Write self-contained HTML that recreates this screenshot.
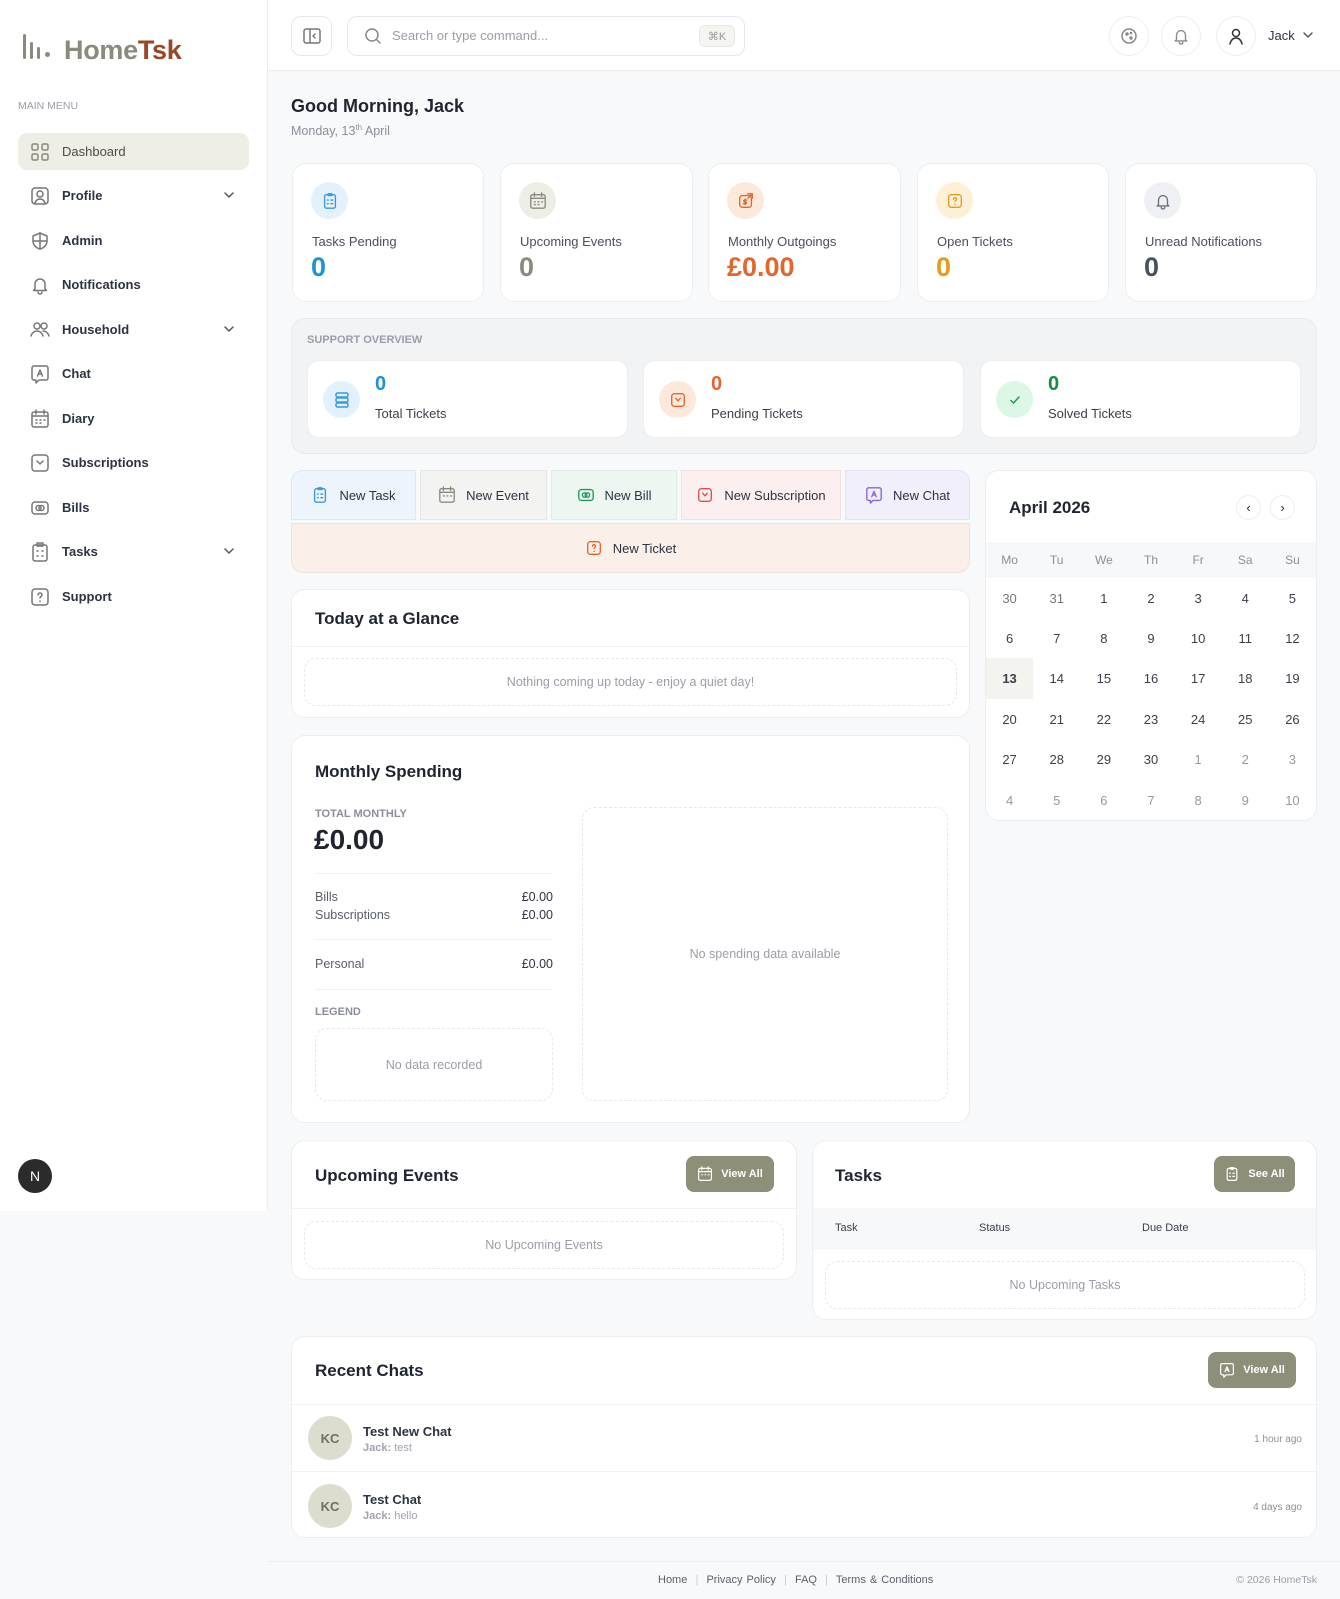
<!DOCTYPE html>
<html><head><meta charset="utf-8">
<style>
*{box-sizing:border-box;margin:0;padding:0}
body{width:1340px;height:1599px;background:#f8f9fa;font-family:"Liberation Sans",sans-serif;color:#1f2430;position:relative;overflow:hidden}
.a{position:absolute}
.card{position:absolute;background:#fff;border:1px solid #eceef0;border-radius:14px}
svg{display:block}
.ic{fill:none;stroke-width:1.5;stroke-linecap:round;stroke-linejoin:round}
.nav{position:absolute;left:18px;width:231px;height:37px;display:flex;align-items:center;font-size:13px;color:#2d3340;font-weight:bold}
.nav svg{margin-left:12px;margin-right:12px}
.chev{position:absolute;right:2px;top:12px}
.stat .lbl{position:absolute;left:19px;top:70px;font-size:13px;color:#4a4f5a}
.stat .num{position:absolute;left:18px;top:88px;font-size:27px;font-weight:bold}
.circ{position:absolute;width:37px;height:37px;border-radius:50%;display:flex;align-items:center;justify-content:center}
.qa{position:absolute;top:470px;height:50px;display:flex;align-items:center;justify-content:center;font-size:13px;color:#2d3340;gap:10px}
.cal{font-size:13px;color:#3a3f4a;text-align:center}
.cal td{padding:0}
.btn{position:absolute;background:#8d8f78;color:#fff;border-radius:8px;font-size:11px;font-weight:bold;display:flex;align-items:center;justify-content:center;gap:8px;height:36px}
.dash{position:absolute;border:1px dashed #e6e8eb;border-radius:12px;display:flex;align-items:center;justify-content:center;font-size:12.5px;color:#9a9ea8}
.h{font-size:17px;font-weight:bold;color:#1f2430;position:absolute}
</style></head><body>

<!-- sidebar -->
<div class="a" style="left:0;top:0;width:268px;height:1211px;background:#fff;border-right:1px solid #eceef0"></div>
<div class="a" style="left:23px;top:34px;width:3px;height:25px;background:#8a8b7e;border-radius:2px"></div>
<div class="a" style="left:30px;top:42px;width:3px;height:17px;background:#8a8b7e;border-radius:2px"></div>
<div class="a" style="left:37px;top:47px;width:3px;height:12px;background:#8a8b7e;border-radius:2px"></div>
<div class="a" style="left:45px;top:52px;width:5px;height:5px;background:#8a8b7e;border-radius:50%"></div>
<div class="a" style="left:64px;top:35px;font-size:27px;font-weight:bold;color:#8a8b7e;letter-spacing:-0.3px">Home<span style="color:#9a4526">Tsk</span></div>
<div class="a" style="left:18px;top:100px;font-size:10.5px;color:#9a9ea8">MAIN MENU</div>

<div class="nav" style="top:133px;background:#efeee6;border-radius:9px;color:#4a4d40;font-weight:normal"><svg width="20" height="20" viewBox="0 0 20 20" class="ic" stroke="#8a8b7e"><rect x="2" y="2" width="6" height="6" rx="1.5"/><rect x="12" y="2" width="6" height="6" rx="1.5"/><rect x="2" y="12" width="6" height="6" rx="1.5"/><rect x="12" y="12" width="6" height="6" rx="1.5"/></svg>Dashboard</div>
<div class="nav" style="top:177px"><svg width="20" height="20" viewBox="0 0 20 20" class="ic" stroke="#777"><rect x="2" y="2" width="16" height="16" rx="3"/><circle cx="10" cy="8" r="3"/><path d="M5 17c1-3 3-4 5-4s4 1 5 4"/></svg>Profile<svg class="chev ic" width="12" height="12" viewBox="0 0 12 12" stroke="#555"><path d="M2 4l4 4 4-4"/></svg></div>
<div class="nav" style="top:222px"><svg width="20" height="20" viewBox="0 0 20 20" class="ic" stroke="#777"><path d="M10 2l7 3v5c0 4-3 7-7 8-4-1-7-4-7-8V5z"/><path d="M10 2v16M3 10h14"/></svg>Admin</div>
<div class="nav" style="top:266px"><svg width="20" height="20" viewBox="0 0 20 20" class="ic" stroke="#777"><path d="M5 14V9a5 5 0 0110 0v5l1.5 1.5h-13z"/><path d="M8 17a2 2 0 004 0"/></svg>Notifications</div>
<div class="nav" style="top:311px"><svg width="20" height="20" viewBox="0 0 20 20" class="ic" stroke="#777"><circle cx="7" cy="6" r="3"/><circle cx="14" cy="6" r="3"/><path d="M1 16c1-3 3-5 6-5s5 2 6 5M13 11c3 0 5 2 6 5"/></svg>Household<svg class="chev ic" width="12" height="12" viewBox="0 0 12 12" stroke="#555"><path d="M2 4l4 4 4-4"/></svg></div>
<div class="nav" style="top:355px"><svg width="20" height="20" viewBox="0 0 20 20" class="ic" stroke="#777"><path d="M4 2h12a2 2 0 012 2v10a2 2 0 01-2 2H9l-3 3v-3H4a2 2 0 01-2-2V4a2 2 0 012-2z"/><path d="M7.5 12l2.5-6 2.5 6M8.3 10h3.4"/></svg>Chat</div>
<div class="nav" style="top:400px"><svg width="20" height="20" viewBox="0 0 20 20" class="ic" stroke="#777"><rect x="2" y="3" width="16" height="15" rx="2"/><path d="M2 7h16M6 1v4M14 1v4M6 11h1M10 11h1M14 11h1M6 14h1M10 14h1"/></svg>Diary</div>
<div class="nav" style="top:444px"><svg width="20" height="20" viewBox="0 0 20 20" class="ic" stroke="#777"><rect x="2" y="2" width="16" height="16" rx="3"/><path d="M7 8l3 3 3-3"/></svg>Subscriptions</div>
<div class="nav" style="top:489px"><svg width="20" height="20" viewBox="0 0 20 20" class="ic" stroke="#777"><rect x="2" y="4" width="16" height="12" rx="3"/><circle cx="8.5" cy="10" r="2.5"/><circle cx="11.5" cy="10" r="2.5"/></svg>Bills</div>
<div class="nav" style="top:533px"><svg width="20" height="20" viewBox="0 0 20 20" class="ic" stroke="#777"><rect x="3" y="3" width="14" height="16" rx="2"/><path d="M7 1h6v3H7zM7 9h1M12 9h1M7 14h1M12 14h1"/></svg>Tasks<svg class="chev ic" width="12" height="12" viewBox="0 0 12 12" stroke="#555"><path d="M2 4l4 4 4-4"/></svg></div>
<div class="nav" style="top:578px"><svg width="20" height="20" viewBox="0 0 20 20" class="ic" stroke="#777"><rect x="2" y="2" width="16" height="16" rx="3"/><path d="M8 8a2 2 0 114 0c0 1.5-2 1.5-2 3M10 14v.5"/></svg>Support</div>
<div class="a" style="left:18px;top:1159px;width:34px;height:34px;border-radius:50%;background:#2b2b2b;color:#fff;font-size:14px;display:flex;align-items:center;justify-content:center">N</div>

<!-- header -->
<div class="a" style="left:268px;top:0;width:1072px;height:71px;background:#fff;border-bottom:1px solid #eceef0"></div>
<div class="a" style="left:291px;top:16px;width:41px;height:40px;border:1px solid #e6e8eb;border-radius:10px;display:flex;align-items:center;justify-content:center"><svg width="20" height="20" viewBox="0 0 20 20" class="ic" stroke="#777"><rect x="2" y="3" width="16" height="14" rx="2"/><path d="M8 3v14M13 8l-2 2 2 2"/></svg></div>
<div class="a" style="left:347px;top:16px;width:398px;height:40px;border:1px solid #e6e8eb;border-radius:10px"></div>
<svg class="a ic" style="left:364px;top:27px" width="18" height="18" viewBox="0 0 18 18" stroke="#888"><circle cx="8" cy="8" r="6"/><path d="M13 13l3 3"/></svg>
<div class="a" style="left:392px;top:28px;font-size:13px;color:#9a9ea8">Search or type command...</div>
<div class="a" style="left:699px;top:25px;width:36px;height:22px;border:1px solid #e6e8eb;border-radius:6px;background:#f5f5ef;font-size:11px;color:#999;display:flex;align-items:center;justify-content:center">⌘K</div>
<div class="a" style="left:1109px;top:16px;width:40px;height:40px;border:1px solid #eceef0;border-radius:50%;display:flex;align-items:center;justify-content:center"><svg width="18" height="18" viewBox="0 0 18 18" class="ic" stroke="#888"><circle cx="9" cy="9" r="7"/><circle cx="7" cy="7" r="1"/><circle cx="11" cy="11" r="1"/><circle cx="11" cy="6" r=".6"/></svg></div>
<div class="a" style="left:1161px;top:16px;width:40px;height:40px;border:1px solid #eceef0;border-radius:50%;display:flex;align-items:center;justify-content:center"><svg width="18" height="18" viewBox="0 0 20 20" class="ic" stroke="#888"><path d="M5 14V9a5 5 0 0110 0v5l1.5 1.5h-13z"/><path d="M8 17a2 2 0 004 0"/></svg></div>
<div class="a" style="left:1216px;top:16px;width:40px;height:40px;border:1px solid #eceef0;border-radius:50%;display:flex;align-items:center;justify-content:center"><svg width="18" height="18" viewBox="0 0 18 18" class="ic" stroke="#333"><circle cx="9" cy="6" r="3.5"/><path d="M3 17c1-4 3-6 6-6s5 2 6 6"/></svg></div>
<div class="a" style="left:1268px;top:28px;font-size:13px;color:#2d3340">Jack</div>
<svg class="a ic" style="left:1302px;top:29px" width="12" height="12" viewBox="0 0 12 12" stroke="#555"><path d="M2 4l4 4 4-4"/></svg>

<!-- greeting -->
<div class="a" style="left:291px;top:96px;font-size:18px;font-weight:bold;color:#1f2430">Good Morning, Jack</div>
<div class="a" style="left:291px;top:123px;font-size:12.5px;color:#8a8e98">Monday, 13<sup style="font-size:8px">th</sup> April</div>

<!-- stat cards -->
<div class="card stat" style="left:292px;top:163px;width:192px;height:139px"><div class="circ" style="left:18px;top:18px;background:#e3f1fc"><svg width="18" height="18" viewBox="0 0 20 20" class="ic" stroke="#3a9ad9"><rect x="4" y="3" width="12" height="15" rx="2"/><path d="M8 2h4v2H8zM7 9h1M11 9h2M7 13h1M11 13h2"/></svg></div><div class="lbl">Tasks Pending</div><div class="num" style="color:#1f92d6">0</div></div>
<div class="card stat" style="left:500px;top:163px;width:193px;height:139px"><div class="circ" style="left:18px;top:18px;background:#eeeee6"><svg width="18" height="18" viewBox="0 0 20 20" class="ic" stroke="#8a8b7e"><rect x="2" y="3" width="16" height="15" rx="2"/><path d="M2 7h16M6 1v4M14 1v4M6 11h1M10 11h1M14 11h1M6 14h1M10 14h1"/></svg></div><div class="lbl">Upcoming Events</div><div class="num" style="color:#8a8b7e">0</div></div>
<div class="card stat" style="left:708px;top:163px;width:193px;height:139px"><div class="circ" style="left:18px;top:18px;background:#fde8dc"><svg width="18" height="18" viewBox="0 0 20 20" class="ic" stroke="#e2672d"><rect x="3" y="4" width="13" height="13" rx="3"/><path d="M12 2h5v5M17 2l-5 5M9 8v6M11 9H8.5a1 1 0 000 2h1a1 1 0 010 2H7"/></svg></div><div class="lbl">Monthly Outgoings</div><div class="num" style="color:#e2672d">£0.00</div></div>
<div class="card stat" style="left:917px;top:163px;width:192px;height:139px"><div class="circ" style="left:18px;top:18px;background:#fdf0d6"><svg width="18" height="18" viewBox="0 0 20 20" class="ic" stroke="#e69a1e"><rect x="3" y="3" width="14" height="14" rx="3"/><path d="M8.3 8a1.7 1.7 0 113.4 0c0 1.3-1.7 1.3-1.7 2.6M10 13.5v.3"/></svg></div><div class="lbl">Open Tickets</div><div class="num" style="color:#e69a1e">0</div></div>
<div class="card stat" style="left:1125px;top:163px;width:192px;height:139px"><div class="circ" style="left:18px;top:18px;background:#eef0f3"><svg width="18" height="18" viewBox="0 0 20 20" class="ic" stroke="#6a7080"><path d="M5 14V9a5 5 0 0110 0v5l1.5 1.5h-13z"/><path d="M8 17a2 2 0 004 0"/></svg></div><div class="lbl">Unread Notifications</div><div class="num" style="color:#4a5160">0</div></div>

<!-- support overview -->
<div class="a" style="left:291px;top:318px;width:1026px;height:136px;background:#f1f3f5;border:1px solid #e8eaed;border-radius:14px"></div>
<div class="a" style="left:307px;top:334px;font-size:11px;color:#9a9ea8;font-weight:bold">SUPPORT OVERVIEW</div>
<div class="card" style="left:307px;top:360px;width:321px;height:78px;border-radius:12px"><div class="circ" style="left:15px;top:20px;background:#e3f1fc"><svg width="18" height="18" viewBox="0 0 18 18" class="ic" stroke="#3a9ad9"><rect x="3" y="2" width="12" height="4" rx="1.5"/><rect x="3" y="7" width="12" height="4" rx="1.5"/><rect x="3" y="12" width="12" height="4" rx="1.5"/></svg></div><div class="a" style="left:67px;top:12px;font-size:20px;font-weight:bold;color:#1f92d6">0</div><div class="a" style="left:67px;top:45px;font-size:13px;color:#3a3f4a">Total Tickets</div></div>
<div class="card" style="left:643px;top:360px;width:321px;height:78px;border-radius:12px"><div class="circ" style="left:15px;top:20px;background:#fde8dc"><svg width="18" height="18" viewBox="0 0 20 20" class="ic" stroke="#e2672d"><rect x="3" y="3" width="14" height="14" rx="3"/><path d="M7.5 8l2.5 3 2.5-3"/></svg></div><div class="a" style="left:67px;top:12px;font-size:20px;font-weight:bold;color:#e2672d">0</div><div class="a" style="left:67px;top:45px;font-size:13px;color:#3a3f4a">Pending Tickets</div></div>
<div class="card" style="left:980px;top:360px;width:321px;height:78px;border-radius:12px"><div class="circ" style="left:15px;top:20px;background:#dcf7e5"><svg width="16" height="16" viewBox="0 0 16 16" class="ic" stroke="#1f9a55"><path d="M4 8.5l2.5 2.5L12 5"/></svg></div><div class="a" style="left:67px;top:12px;font-size:20px;font-weight:bold;color:#178a4a">0</div><div class="a" style="left:67px;top:45px;font-size:13px;color:#3a3f4a">Solved Tickets</div></div>

<!-- quick actions -->
<div class="qa" style="left:291px;width:125px;background:#edf4fb;border:1px solid #dfe8f1;border-radius:12px 0 0 0"><svg width="18" height="18" viewBox="0 0 20 20" class="ic" stroke="#3a9ad9"><rect x="4" y="3" width="12" height="15" rx="2"/><path d="M8 2h4v2H8zM7 9h1M11 9h2M7 13h1M11 13h2"/></svg>New Task</div>
<div class="qa" style="left:420px;width:127px;background:#f3f4f1;border:1px solid #e6e8e4"><svg width="18" height="18" viewBox="0 0 20 20" class="ic" stroke="#8a8b7e"><rect x="2" y="3" width="16" height="15" rx="2"/><path d="M2 7h16M6 1v4M14 1v4M6 11h1M10 11h1M14 11h1"/></svg>New Event</div>
<div class="qa" style="left:551px;width:126px;background:#eef6f1;border:1px solid #e0ece4"><svg width="18" height="18" viewBox="0 0 20 20" class="ic" stroke="#1f9a55"><rect x="2" y="4" width="16" height="12" rx="3"/><circle cx="8.5" cy="10" r="2.5"/><circle cx="11.5" cy="10" r="2.5"/></svg>New Bill</div>
<div class="qa" style="left:681px;width:160px;background:#fbf0ef;border:1px solid #f1e2e0"><svg width="18" height="18" viewBox="0 0 20 20" class="ic" stroke="#e04c4c"><rect x="3" y="3" width="14" height="14" rx="3"/><path d="M7.5 8l2.5 3 2.5-3"/></svg>New Subscription</div>
<div class="qa" style="left:845px;width:125px;background:#f1f0fa;border:1px solid #e4e2f1;border-radius:0 12px 0 0"><svg width="18" height="18" viewBox="0 0 20 20" class="ic" stroke="#8a64d6"><path d="M4 2h12a2 2 0 012 2v10a2 2 0 01-2 2H9l-3 3v-3H4a2 2 0 01-2-2V4a2 2 0 012-2z"/><path d="M7.5 12l2.5-6 2.5 6M8.3 10h3.4"/></svg>New Chat</div>
<div class="qa" style="left:291px;top:523px;width:679px;background:#fbefe9;border:1px solid #f3e2d9;border-radius:0 0 12px 12px"><svg width="18" height="18" viewBox="0 0 20 20" class="ic" stroke="#e2672d"><rect x="3" y="3" width="14" height="14" rx="3"/><path d="M8.3 8a1.7 1.7 0 113.4 0c0 1.3-1.7 1.3-1.7 2.6M10 13.5v.3"/></svg>New Ticket</div>

<!-- today at a glance -->
<div class="card" style="left:291px;top:589px;width:679px;height:129px"><div class="h" style="left:23px;top:19px">Today at a Glance</div><div class="a" style="left:0;top:56px;width:677px;border-top:1px solid #f1f2f4"></div><div class="dash" style="left:12px;top:68px;width:653px;height:48px">Nothing coming up today - enjoy a quiet day!</div></div>

<!-- monthly spending -->
<div class="card" style="left:291px;top:735px;width:679px;height:388px">
<div class="h" style="left:23px;top:26px">Monthly Spending</div>
<div class="a" style="left:23px;top:72px;font-size:11px;color:#8a8e98;font-weight:bold">TOTAL MONTHLY</div>
<div class="a" style="left:22px;top:88px;font-size:28px;font-weight:bold;color:#1f2430">£0.00</div>
<div class="a" style="left:23px;top:137px;width:238px;border-top:1px solid #eef0f2"></div>
<div class="a" style="left:23px;top:154px;font-size:12.5px;color:#5a5f6a">Bills</div><div class="a" style="right:416px;top:154px;font-size:12.5px;color:#2d3340">£0.00</div>
<div class="a" style="left:23px;top:172px;font-size:12.5px;color:#5a5f6a">Subscriptions</div><div class="a" style="right:416px;top:172px;font-size:12.5px;color:#2d3340">£0.00</div>
<div class="a" style="left:23px;top:203px;width:238px;border-top:1px solid #eef0f2"></div>
<div class="a" style="left:23px;top:221px;font-size:12.5px;color:#5a5f6a">Personal</div><div class="a" style="right:416px;top:221px;font-size:12.5px;color:#2d3340">£0.00</div>
<div class="a" style="left:23px;top:253px;width:238px;border-top:1px solid #eef0f2"></div>
<div class="a" style="left:23px;top:270px;font-size:11px;color:#8a8e98;font-weight:bold">LEGEND</div>
<div class="dash" style="left:23px;top:292px;width:238px;height:73px">No data recorded</div>
<div class="dash" style="left:290px;top:71px;width:366px;height:294px">No spending data available</div>
</div>

<!-- calendar -->
<div class="card" style="left:985px;top:470px;width:332px;height:351px;overflow:hidden">
<div class="a" style="left:23px;top:27px;font-size:17px;font-weight:bold;color:#1f2430">April 2026</div>
<div class="a" style="left:250px;top:24px;width:25px;height:25px;border:1px solid #eceef0;border-radius:50%;font-size:13px;display:flex;align-items:center;justify-content:center">‹</div>
<div class="a" style="left:284px;top:24px;width:25px;height:25px;border:1px solid #eceef0;border-radius:50%;font-size:13px;display:flex;align-items:center;justify-content:center">›</div>
<div class="a" style="left:0;top:71px;width:330px;height:36px;background:#f7f8f9"></div>
<div class="a" style="left:0;top:187px;width:47px;height:41px;background:#f3f3ef"></div>
<table class="a cal" style="left:0;top:71px;width:330px;border-collapse:collapse;table-layout:fixed">
<tr style="height:36px;color:#8a8e98;font-size:12px"><td>Mo</td><td>Tu</td><td>We</td><td>Th</td><td>Fr</td><td>Sa</td><td>Su</td></tr>
<tr style="height:40px"><td style="color:#777">30</td><td style="color:#777">31</td><td>1</td><td>2</td><td>3</td><td>4</td><td>5</td></tr>
<tr style="height:40px"><td>6</td><td>7</td><td>8</td><td>9</td><td>10</td><td>11</td><td>12</td></tr>
<tr style="height:41px"><td style="font-weight:bold">13</td><td>14</td><td>15</td><td>16</td><td>17</td><td>18</td><td>19</td></tr>
<tr style="height:40px"><td>20</td><td>21</td><td>22</td><td>23</td><td>24</td><td>25</td><td>26</td></tr>
<tr style="height:41px"><td>27</td><td>28</td><td>29</td><td>30</td><td style="color:#999">1</td><td style="color:#999">2</td><td style="color:#999">3</td></tr>
<tr style="height:41px;color:#999"><td>4</td><td>5</td><td>6</td><td>7</td><td>8</td><td>9</td><td>10</td></tr>
</table>
</div>

<!-- upcoming events -->
<div class="card" style="left:291px;top:1140px;width:506px;height:140px">
<div class="h" style="left:23px;top:25px">Upcoming Events</div>
<div class="btn" style="left:394px;top:15px;width:88px"><svg width="16" height="16" viewBox="0 0 20 20" class="ic" stroke="#fff"><rect x="2" y="3" width="16" height="15" rx="2"/><path d="M2 7h16M6 1v4M14 1v4M6 11h1M10 11h1M14 11h1"/></svg>View All</div>
<div class="a" style="left:0;top:67px;width:504px;border-top:1px solid #f1f2f4"></div>
<div class="dash" style="left:12px;top:80px;width:480px;height:48px">No Upcoming Events</div>
</div>

<!-- tasks -->
<div class="card" style="left:812px;top:1140px;width:505px;height:180px">
<div class="h" style="left:22px;top:25px">Tasks</div>
<div class="btn" style="left:401px;top:15px;width:81px"><svg width="16" height="16" viewBox="0 0 20 20" class="ic" stroke="#fff"><rect x="4" y="3" width="12" height="15" rx="2"/><path d="M8 2h4v2H8zM7 9h1M11 9h2M7 13h1M11 13h2"/></svg>See All</div>
<div class="a" style="left:0;top:67px;width:503px;height:42px;background:#f7f8f9"></div>
<div class="a" style="left:22px;top:81px;font-size:11px;color:#3a3f4a">Task</div>
<div class="a" style="left:166px;top:81px;font-size:11px;color:#3a3f4a">Status</div>
<div class="a" style="left:329px;top:81px;font-size:11px;color:#3a3f4a">Due Date</div>
<div class="dash" style="left:12px;top:120px;width:480px;height:48px">No Upcoming Tasks</div>
</div>

<!-- recent chats -->
<div class="card" style="left:291px;top:1336px;width:1026px;height:202px">
<div class="h" style="left:23px;top:24px">Recent Chats</div>
<div class="btn" style="left:916px;top:15px;width:88px"><svg width="16" height="16" viewBox="0 0 20 20" class="ic" stroke="#fff"><path d="M4 2h12a2 2 0 012 2v10a2 2 0 01-2 2H9l-3 3v-3H4a2 2 0 01-2-2V4a2 2 0 012-2z"/><path d="M7.5 12l2.5-6 2.5 6M8.3 10h3.4"/></svg>View All</div>
<div class="a" style="left:0;top:67px;width:1024px;border-top:1px solid #f1f2f4"></div>
<div class="a" style="left:16px;top:79px;width:44px;height:44px;border-radius:50%;background:#dcdccf;color:#6f7062;font-size:13px;font-weight:bold;display:flex;align-items:center;justify-content:center">KC</div>
<div class="a" style="left:71px;top:87px;font-size:13px;color:#2d3340;font-weight:bold">Test New Chat</div>
<div class="a" style="left:71px;top:105px;font-size:11px;color:#a0a4ae"><b>Jack:</b> test</div>
<div class="a" style="right:14px;top:97px;font-size:10px;color:#8a8e98">1 hour ago</div>
<div class="a" style="left:0;top:134px;width:1024px;border-top:1px solid #f1f2f4"></div>
<div class="a" style="left:16px;top:147px;width:44px;height:44px;border-radius:50%;background:#dcdccf;color:#6f7062;font-size:13px;font-weight:bold;display:flex;align-items:center;justify-content:center">KC</div>
<div class="a" style="left:71px;top:155px;font-size:13px;color:#2d3340;font-weight:bold">Test Chat</div>
<div class="a" style="left:71px;top:173px;font-size:11px;color:#a0a4ae"><b>Jack:</b> hello</div>
<div class="a" style="right:14px;top:165px;font-size:10px;color:#8a8e98">4 days ago</div>
</div>

<!-- footer -->
<div class="a" style="left:268px;top:1561px;width:1072px;border-top:1px solid #eceef0"></div>
<div class="a" style="left:658px;top:1574px;font-size:11px;color:#5a5f6a;word-spacing:1px">Home &nbsp;<span style="color:#ccc">|</span>&nbsp; Privacy Policy &nbsp;<span style="color:#ccc">|</span>&nbsp; FAQ &nbsp;<span style="color:#ccc">|</span>&nbsp; Terms &amp; Conditions</div>
<div class="a" style="right:23px;top:1574px;font-size:10.5px;color:#9a9ea8">© 2026 HomeTsk</div>
</body></html>
